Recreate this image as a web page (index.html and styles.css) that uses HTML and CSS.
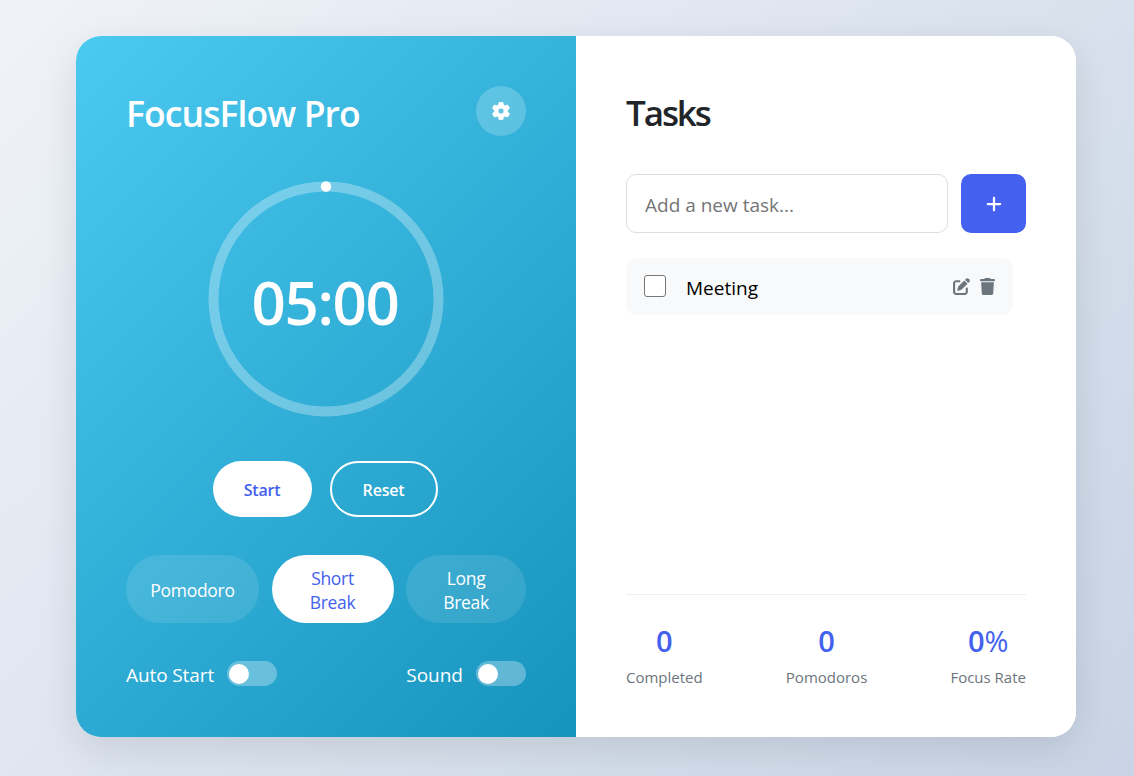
FILE: index.html
```html
<!DOCTYPE html>
<html lang="en">
<head>
<meta charset="utf-8">
<title>FocusFlow Pro</title>
<link rel="stylesheet" href="styles.css">
</head>
<body>
<main class="card">
  <section class="timer-panel">
    <header class="panel-head">
      <h1 class="title brand">FocusFlow Pro</h1>
      <button class="settings" aria-label="Settings">
        <svg width="18" height="18" viewBox="0 0 512 512" fill="currentColor" stroke="currentColor" stroke-width="14"><path d="M495.9 166.6c3.2 8.7 .5 18.4-6.4 24.6l-43.3 39.4c1.1 8.3 1.7 16.8 1.7 25.4s-.6 17.1-1.7 25.4l43.3 39.4c6.9 6.2 9.6 15.9 6.4 24.6c-4.4 11.9-9.7 23.3-15.8 34.3l-4.7 8.1c-6.6 11-14 21.4-22.1 31.2c-5.9 7.2-15.7 9.6-24.5 6.8l-55.7-17.7c-13.4 10.3-28.2 18.9-44 25.4l-12.5 57.1c-2 9.1-9 16.3-18.2 17.8c-13.8 2.3-28 3.5-42.5 3.5s-28.7-1.2-42.5-3.5c-9.2-1.5-16.2-8.7-18.2-17.8l-12.5-57.1c-15.8-6.5-30.6-15.1-44-25.4L83.1 425.9c-8.8 2.8-18.6 .3-24.5-6.8c-8.1-9.8-15.5-20.2-22.1-31.2l-4.7-8.1c-6.1-11-11.4-22.4-15.8-34.3c-3.2-8.7-.5-18.4 6.4-24.6l43.3-39.4C64.6 273.1 64 264.6 64 256s.6-17.1 1.7-25.4L22.4 191.2c-6.9-6.2-9.6-15.9-6.4-24.6c4.4-11.9 9.7-23.3 15.8-34.3l4.7-8.1c6.600-11 14-21.4 22.1-31.2c5.9-7.2 15.7-9.6 24.5-6.8l55.7 17.7c13.4-10.3 28.2-18.9 44-25.4l12.5-57.1c2-9.1 9-16.3 18.2-17.8C227.3 1.2 241.5 0 256 0s28.7 1.2 42.5 3.5c9.2 1.5 16.2 8.7 18.2 17.8l12.5 57.1c15.8 6.5 30.6 15.1 44 25.4l55.7-17.7c8.8-2.8 18.6-.3 24.5 6.8c8.1 9.8 15.5 20.2 22.1 31.2l4.7 8.1c6.1 11 11.4 22.4 15.8 34.3zM256 336a80 80 0 1 0 0-160 80 80 0 1 0 0 160z"/></svg>
      </button>
    </header>
    <div class="dial">
      <svg class="ring" width="250" height="250" viewBox="0 0 250 250" fill="none" stroke-width="10">
        <circle cx="125" cy="125" r="112.5" stroke="#fff" stroke-opacity=".3"/>
        <circle cx="125" cy="12.5" r="5.2" fill="#fff"/>
      </svg>
      <span class="time">05:00</span>
    </div>
    <div class="controls">
      <button class="btn btn-start">Start</button>
      <button class="btn btn-reset">Reset</button>
    </div>
    <div class="modes">
      <button class="mode">Pomodoro</button>
      <button class="mode active">Short<br>Break</button>
      <button class="mode">Long<br>Break</button>
    </div>
    <div class="toggles">
      <div class="toggle"><span class="auto-label">Auto Start</span><span class="switch"></span></div>
      <div class="toggle"><span class="sound-label">Sound</span><span class="switch"></span></div>
    </div>
  </section>
  <section class="task-panel">
    <h2 class="title tasks-title">Tasks</h2>
    <div class="entry">
      <input class="entry-field" type="text" placeholder="Add a new task...">
      <button class="add" aria-label="Add task">
        <svg width="16" height="18" viewBox="0 0 448 512" fill="currentColor"><path d="M256 80c0-17.700-14.300-32-32-32s-32 14.300-32 32v144H48c-17.700 0-32 14.300-32 32s14.300 32 32 32h144v144c0 17.700 14.300 32 32 32s32-14.300 32-32V288h144c17.700 0 32-14.300 32-32s-14.300-32-32-32H256V80z"/></svg>
      </button>
    </div>
    <div class="task">
      <span class="check"></span>
      <span class="task-name">Meeting</span>
      <span class="actions">
        <svg width="17" height="17" viewBox="0 0 512 512" fill="currentColor"><path d="M471.600 21.700c-21.900-21.900-57.300-21.900-79.200 0L362.300 51.700l97.900 97.900 30.100-30.100c21.900-21.900 21.900-57.300 0-79.200L471.600 21.700zm-299.200 220c-6.100 6.100-10.800 13.600-13.500 21.900l-29.600 88.800c-2.900 8.600-.6 18.100 5.800 24.600s15.900 8.700 24.600 5.800l88.800-29.600c8.200-2.700 15.700-7.400 21.900-13.500L437.700 172.300 339.700 74.300 172.400 241.700zM96 64C43 64 0 107 0 160V416c0 53 43 96 96 96H352c53 0 96-43 96-96V320c0-17.700-14.300-32-32-32s-32 14.300-32 32v96c0 17.700-14.300 32-32 32H96c-17.700 0-32-14.300-32-32V160c0-17.700 14.300-32 32-32h96c17.700 0 32-14.300 32-32s-14.300-32-32-32H96z"/></svg>
        <svg width="15" height="17" viewBox="0 0 448 512" fill="currentColor"><path d="M135.200 17.700L128 32H32C14.300 32 0 46.300 0 64S14.300 96 32 96H416c17.700 0 32-14.300 32-32s-14.300-32-32-32H320l-7.200-14.300C307.400 6.800 296.300 0 284.200 0H163.800c-12.100 0-23.200 6.800-28.600 17.700zM416 128H32L53.200 467c1.600 25.300 22.600 45 47.900 45H346.900c25.300 0 46.300-19.700 47.900-45L416 128z"/></svg>
      </span>
    </div>
    <footer class="stats">
      <div class="stat"><strong class="value">0</strong><span class="label">Completed</span></div>
      <div class="stat"><strong class="value">0</strong><span class="label">Pomodoros</span></div>
      <div class="stat"><strong class="value">0<span class="percent">%</span></strong><span class="label">Focus Rate</span></div>
    </footer>
  </section>
</main>
</body>
</html>
```
FILE: styles.css
```css
* { box-sizing: border-box; margin: 0; padding: 0; }
body {
  min-height: 776px;
  padding: 36px 58px 39px 76px;
  font-family: "Open Sans", "Noto Sans", sans-serif;
  background: linear-gradient(135deg, #f0f3f8 0%, #c8d4e5 100%);
  overflow: hidden;
}
button { border: 0; font: inherit; color: inherit; }
svg { display: block; }
.card {
  display: flex;
  width: 1000px;
  height: 701px;
  border-radius: 25px;
  background: #fff;
  box-shadow: 0 12px 38px rgba(0, 0, 0, .1);
  overflow: hidden;
}
.timer-panel, .task-panel { width: 500px; padding: 50px; display: flex; flex-direction: column; }
.timer-panel { color: #fff; background: linear-gradient(135deg, #4cc9f0 0%, #1794be 100%); }
.title { font-size: 35.5px; line-height: 54px; font-weight: 600; white-space: nowrap; }
.brand { letter-spacing: -.9px; }
.tasks-title { font-size: 35px; letter-spacing: -2.1px; }
.panel-head { display: flex; justify-content: space-between; height: 82px; }
.settings {
  width: 50px; height: 50px; border-radius: 50%;
  display: grid; place-items: center;
  background: rgba(255, 255, 255, .2);
}
.dial { width: 250px; height: 250px; margin: 6px auto 0; display: grid; place-items: center; }
.ring, .time { grid-area: 1 / 1; }
.time { font-size: 60px; line-height: 80px; font-weight: 600; padding-top: 5px; margin-left: -2px; letter-spacing: -1.3px; }
.controls { display: flex; justify-content: center; gap: 18px; margin-top: 37px; padding-right: 2px; }
.btn { height: 56px; border-radius: 28px; font-size: 16px; font-weight: 600; letter-spacing: -.2px; padding-top: 2px; }
.btn-start { width: 99px; background: #fff; color: #4361ee; }
.btn-reset { width: 108px; background: none; border: 2px solid #fff; }
.modes { display: grid; grid-template-columns: 133px 122px 120px; justify-content: space-between; margin-top: 38px; }
.mode {
  height: 68px; border-radius: 34px; padding-top: 2px;
  font-size: 17.5px; line-height: 24px; letter-spacing: -.3px;
  background: rgba(255, 255, 255, .1);
}
.mode.active { background: #fff; color: #4361ee; }
.toggles { display: flex; justify-content: space-between; margin-top: 38px; }
.toggle { display: flex; align-items: center; gap: 13px; height: 25px; font-size: 19px; white-space: nowrap; }
.toggle span:first-child { padding-top: 2px; }
.auto-label { letter-spacing: -.1px; }
.switch { width: 50px; height: 25px; border-radius: 13px; padding: 3px 2px; background: rgba(255, 255, 255, .3); }
.switch::before { content: ""; display: block; width: 20px; height: 20px; border-radius: 50%; background: #fff; }
.task-panel { background: #fff; color: #212529; }
.entry { display: flex; gap: 13px; margin-top: 34px; }
.entry-field {
  width: 322px; height: 59px; padding: 2px 18px 0;
  border: 1px solid #ddd; border-radius: 10px;
  font: 19px "Open Sans", "Noto Sans", sans-serif;
}
.entry-field::placeholder { color: #757575; }
.add { width: 65px; height: 59px; border-radius: 10px; background: #4361ee; color: #fff; display: grid; place-items: center; }
.task {
  display: flex; align-items: center;
  width: 387px; height: 56.5px; margin-top: 25px; padding: 0 18px;
  border-radius: 10px; background: #f8f9fa; color: #000;
}
.check { width: 22px; height: 22px; border: 1px solid #767676; border-radius: 3px; background: #fff; }
.task-name { margin-left: 20px; font-size: 19px; padding-top: 3px; }
.actions { display: flex; gap: 10px; margin-left: auto; padding-top: 1px; color: #6c757d; }
.stats { display: flex; justify-content: space-between; margin-top: auto; border-top: 1px solid #eee; height: 93px; padding-top: 27px; }
.stat { display: flex; flex-direction: column; align-items: center; }
.value { font-size: 29px; line-height: 38px; font-weight: 600; color: #4361ee; }
.percent { font-weight: 400; }
.label { font-size: 15px; line-height: 22px; margin-top: 6px; color: #6c757d; white-space: nowrap; }
```
